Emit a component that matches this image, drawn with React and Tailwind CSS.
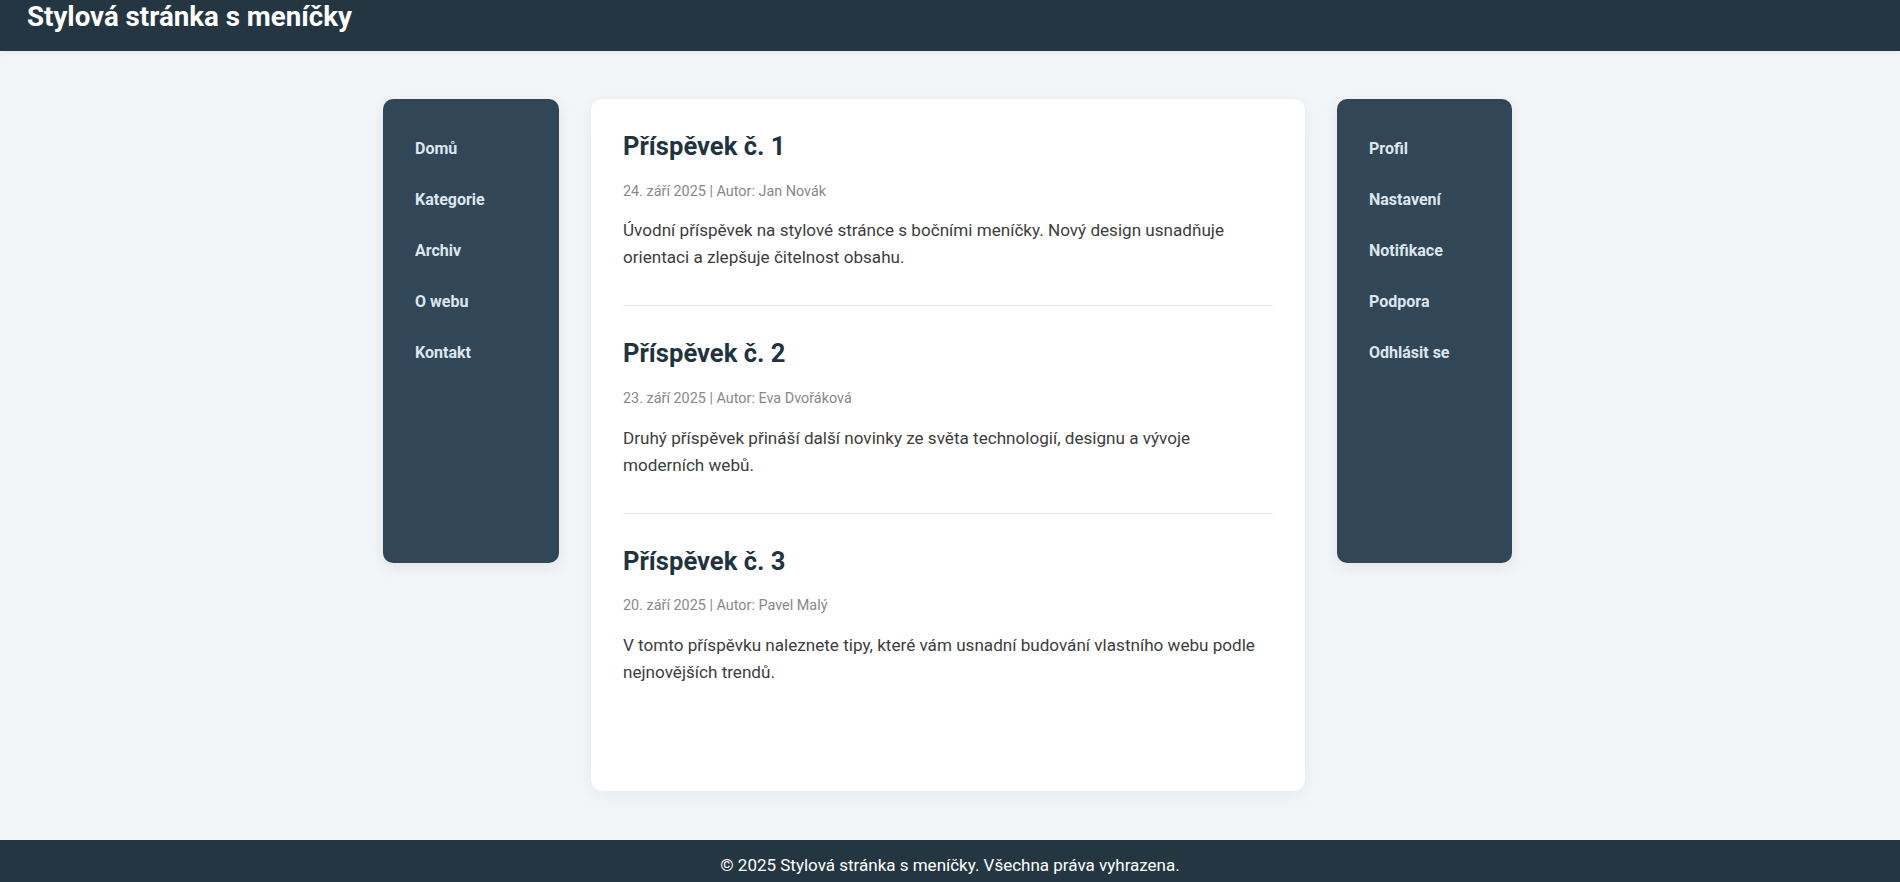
const leftNav = ['Domů', 'Kategorie', 'Archiv', 'O webu', 'Kontakt'];
const rightNav = ['Profil', 'Nastavení', 'Notifikace', 'Podpora', 'Odhlásit se'];

const posts = [
  {
    title: 'Příspěvek č. 1',
    meta: '24. září 2025 | Autor: Jan Novák',
    text: 'Úvodní příspěvek na stylové stránce s bočními meníčky. Nový design usnadňuje orientaci a zlepšuje čitelnost obsahu.',
  },
  {
    title: 'Příspěvek č. 2',
    meta: '23. září 2025 | Autor: Eva Dvořáková',
    text: 'Druhý příspěvek přináší další novinky ze světa technologií, designu a vývoje moderních webů.',
  },
  {
    title: 'Příspěvek č. 3',
    meta: '20. září 2025 | Autor: Pavel Malý',
    text: 'V tomto příspěvku naleznete tipy, které vám usnadní budování vlastního webu podle nejnovějších trendů.',
  },
];

function SideMenu({ items }) {
  return (
    <aside className="h-[464px] rounded-[10px] bg-[#314757] shadow-[0_4px_16px_rgba(0,0,0,0.08)] pt-[39px] pl-8">
      <ul className="flex flex-col gap-[30px]">
        {items.map((item) => (
          <li key={item}>
            <a href="#" className="block text-base leading-[21px] font-bold text-[#dde6ee]">
              {item}
            </a>
          </li>
        ))}
      </ul>
    </aside>
  );
}

export default function App() {
  return (
    <div className="min-h-screen bg-[#f3f6f9] font-['Roboto',sans-serif] flex flex-col">
      <header className="h-[51px] bg-[#243642] pl-[27px] shadow-[0_2px_6px_rgba(0,0,0,0.06)]">
        <h1 className="text-[27.7px] leading-[1.2] font-bold text-white">Stylová stránka s meníčky</h1>
      </header>

      <div className="w-[1134px] mx-auto mt-12 mb-[49px] flex items-start">
        <div className="w-[176px] shrink-0">
          <SideMenu items={leftNav} />
        </div>

        <main className="w-[714px] ml-8 shrink-0 min-h-[692px] rounded-xl bg-white px-8 pt-8 shadow-[0_4px_20px_rgba(0,0,0,0.06)]">
          {posts.map((post, i) => (
            <article
              key={post.title}
              className={i < posts.length - 1 ? 'pb-[34px] mb-8 border-b border-[#e8ebee]' : ''}
            >
              <h2 className="text-[25.6px] leading-[1.2] font-bold text-[#1f3441]">{post.title}</h2>
              <p className="mt-[19px] text-[14.4px] leading-[1.5] text-[#888]">{post.meta}</p>
              <p className="mt-[15px] text-[17.1px] leading-[27px] text-[#3d3d3d]">{post.text}</p>
            </article>
          ))}
        </main>

        <div className="w-[175px] ml-8 shrink-0">
          <SideMenu items={rightNav} />
        </div>
      </div>

      <footer className="bg-[#243642] pt-[13px] pb-4 text-center">
        <p className="text-[17px] leading-6 text-white">© 2025 Stylová stránka s meníčky. Všechna práva vyhrazena.</p>
      </footer>
    </div>
  );
}
